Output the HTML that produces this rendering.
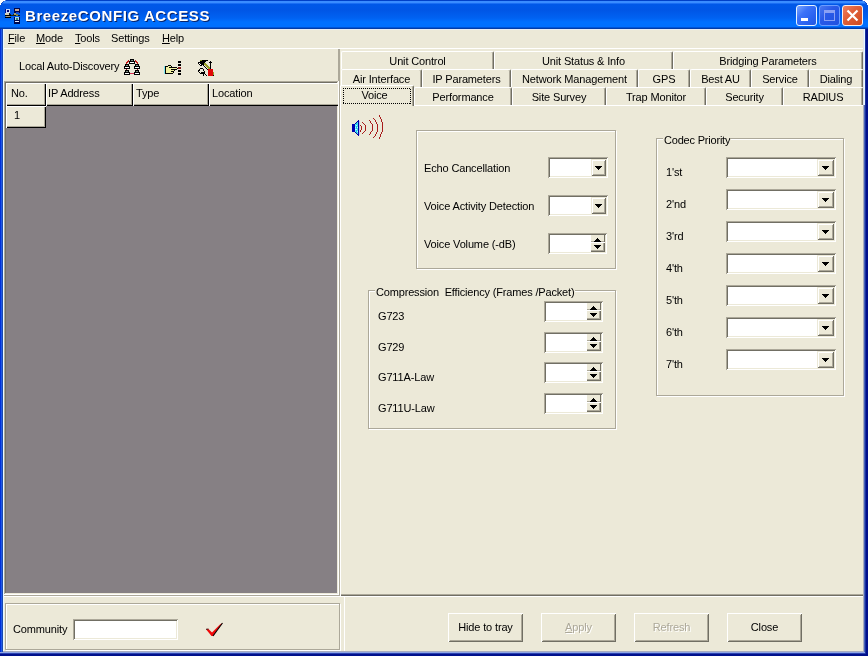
<!DOCTYPE html>
<html><head><meta charset="utf-8"><style>
*{margin:0;padding:0;box-sizing:border-box}
html,body{width:868px;height:656px;overflow:hidden;background:#fff}
body{position:relative;font-family:"Liberation Sans",sans-serif;font-size:11px;color:#000;letter-spacing:-0.15px}
#win{position:absolute;left:0;top:0;width:868px;height:656px;background:#0831d9;}
#title{position:absolute;left:0;top:0;width:868px;height:29px;
 background:linear-gradient(to bottom,#0040c8 0px,#0040c8 1px,#3a8cff 1px,#3a8cff 3px,#1a6ef4 3px,#1a6ef4 4px,#0058e8 4px,#0056e6 10px,#0062f2 18px,#0070ff 22px,#0070ff 27px,#0054d8 27px,#0054d8 28px,#003ca8 28px,#003ca8 29px)}
#client{position:absolute;left:4px;top:29px;width:859px;height:622px;background:#ece9d8}
.t{position:absolute;white-space:nowrap;line-height:13px;will-change:transform}
.u{text-decoration:underline;text-underline-offset:1px}
.r{position:absolute}
.hd{background:#ece9d8;box-shadow:inset 1px 1px #fff,inset -1px -1px #000,inset -2px -2px #aca899}
.grp{position:absolute;border:1px solid #aca899;box-shadow:1px 1px #fff, inset 1px 1px #fff}
.sunk{background:#fff;box-shadow:inset 1px 1px #aca899,inset -1px -1px #fff,inset 2px 2px #716f64,inset -2px -2px #ece9d8}
.rais{background:#ece9d8;box-shadow:inset 1px 1px #fff,inset -1px -1px #716f64,inset 2px 2px #ece9d8,inset -2px -2px #aca899}
.dbtn{position:absolute;background:#ece9d8;box-shadow:inset 1px 1px #ece9d8,inset -1px -1px #716f64,inset 2px 2px #fff,inset -2px -2px #aca899}
.tab{position:absolute;background:#ece9d8;border-left:1px solid #fff;border-top:1px solid #fff;border-right:1px solid #716f64;box-shadow:inset -1px 0 #aca899;border-radius:2px 2px 0 0;text-align:center;line-height:13px;padding-top:3px;white-space:nowrap;will-change:transform}
.arr{position:absolute;width:0;height:0;border-left:3.5px solid transparent;border-right:3.5px solid transparent;border-top:4px solid #000}
.arru{position:absolute;width:0;height:0;border-left:3.5px solid transparent;border-right:3.5px solid transparent;border-bottom:4px solid #000}
</style></head><body>
<div id="win">
 <div id="title"></div>
 <div class="t" style="left:26px;top:8px;font-size:15px;font-weight:bold;color:#0a246a;letter-spacing:0.6px;line-height:17px">BreezeCONFIG ACCESS</div>
 <div class="t" style="left:25px;top:7px;font-size:15px;font-weight:bold;color:#fff;letter-spacing:0.6px;line-height:17px">BreezeCONFIG ACCESS</div>
 <div id="client"></div>
 <div class="r" style="left:796px;top:5px;width:21px;height:21px;border:1px solid #e8f4ff;border-radius:3px;background:linear-gradient(135deg,#7aa6ff 0%,#3c72f8 35%,#2a62f0 70%,#2458e0 100%)"></div>
 <div class="r" style="left:801px;top:18px;width:7px;height:3px;background:#fff"></div>
 <div class="r" style="left:819px;top:5px;width:21px;height:21px;border:1px solid #6c9cff;border-radius:3px;background:linear-gradient(135deg,#4a78f0 0%,#2a5ae8 40%,#2050e0 100%)"></div>
 <div class="r" style="left:824px;top:10px;width:11px;height:11px;border:1px solid #8aa0f4;border-top-width:3px"></div>
 <div class="r" style="left:842px;top:5px;width:21px;height:21px;border:1px solid #f8f0f0;border-radius:3px;background:linear-gradient(135deg,#f08060 0%,#e0603a 40%,#d04a20 100%)"></div>
 <svg class="r" style="left:842px;top:5px" width="21" height="21"><path d="M5.5 5.5 L15.5 15.5 M15.5 5.5 L5.5 15.5" stroke="#fff" stroke-width="2.2"/></svg>
 <svg class="r" style="left:0;top:0" width="6" height="6" shape-rendering="crispEdges"><rect x="0" y="0" width="5" height="1" fill="#fff"/><rect x="0" y="1" width="3" height="1" fill="#fff"/><rect x="0" y="2" width="2" height="1" fill="#fff"/><rect x="0" y="3" width="1" height="2" fill="#fff"/><rect x="5" y="0" width="1" height="1" fill="#5080e0"/><rect x="3" y="1" width="1" height="1" fill="#3060d0"/><rect x="2" y="2" width="1" height="1" fill="#1850c8"/><rect x="1" y="3" width="1" height="1" fill="#1048c0"/></svg>
 <svg class="r" style="left:862px;top:0" width="6" height="6" shape-rendering="crispEdges"><rect x="1" y="0" width="5" height="1" fill="#fff"/><rect x="3" y="1" width="3" height="1" fill="#fff"/><rect x="4" y="2" width="2" height="1" fill="#fff"/><rect x="5" y="3" width="1" height="2" fill="#fff"/><rect x="0" y="0" width="1" height="1" fill="#5080e0"/><rect x="2" y="1" width="1" height="1" fill="#3060d0"/><rect x="3" y="2" width="1" height="1" fill="#1850c8"/><rect x="4" y="3" width="1" height="1" fill="#1048c0"/></svg>

 <div class="t" style="left:8px;top:32px;"><span class="u">F</span>ile</div>
 <div class="t" style="left:36px;top:32px;"><span class="u">M</span>ode</div>
 <div class="t" style="left:75px;top:32px;"><span class="u">T</span>ools</div>
 <div class="t" style="left:111px;top:32px;">Settings</div>
 <div class="t" style="left:162px;top:32px;"><span class="u">H</span>elp</div>
 <div class="r" style="left:4px;top:48px;width:860px;height:1px;background:#fff;"></div>
 <div class="t" style="left:19px;top:60px;">Local Auto-Discovery</div>
 <div class="r" style="left:338px;top:49px;width:1px;height:32px;background:#aca899;"></div>
 <div class="r" style="left:4px;top:81px;width:335px;height:1px;background:#aca899;"></div>
 <div class="r" style="left:4px;top:81px;width:1px;height:514px;background:#aca899;"></div>
 <div class="r" style="left:5px;top:82px;width:333px;height:1px;background:#716f64;"></div>
 <div class="r" style="left:5px;top:82px;width:1px;height:512px;background:#716f64;"></div>
 <div class="r" style="left:6px;top:83px;width:331px;height:510px;background:#868084;"></div>
 <div class="r" style="left:337px;top:82px;width:1px;height:512px;background:#ece9d8;"></div>
 <div class="r" style="left:5px;top:593px;width:333px;height:1px;background:#ece9d8;"></div>
 <div class="r hd" style="left:6px;top:83px;width:40px;height:23px"></div>
 <div class="t" style="left:11px;top:87px;">No.</div>
 <div class="r hd" style="left:46px;top:83px;width:87px;height:23px"></div>
 <div class="t" style="left:48px;top:87px;">IP Address</div>
 <div class="r hd" style="left:133px;top:83px;width:76px;height:23px"></div>
 <div class="t" style="left:136px;top:87px;">Type</div>
 <div class="r hd" style="left:209px;top:83px;width:131px;height:23px"></div>
 <div class="t" style="left:212px;top:87px;">Location</div>
 <div class="r hd" style="left:6px;top:106px;width:40px;height:22px"></div>
 <div class="t" style="left:14px;top:109px;">1</div>
 <div class="r" style="left:338px;top:81px;width:1px;height:514px;background:#fff;"></div>
 <div class="r" style="left:4px;top:594px;width:335px;height:1px;background:#fff;"></div>
 <div class="r" style="left:4px;top:595px;width:336px;height:1px;background:#aca899;"></div>
 <div class="r" style="left:4px;top:596px;width:860px;height:1px;background:#fff;"></div>
 <div class="grp" style="left:5px;top:603px;width:335px;height:47px"></div>
 <div class="t" style="left:13px;top:623px;">Community</div>
 <div class="r sunk" style="left:73px;top:619px;width:105px;height:21px"></div>
 <svg class="r" style="left:3px;top:6px" width="20" height="20" shape-rendering="crispEdges"><rect x="2" y="3" width="1" height="5" fill="#001090"/><rect x="3" y="3" width="4" height="1" fill="#c8d8f8"/><rect x="3" y="4" width="1" height="3" fill="#c8d8f8"/><rect x="6" y="4" width="1" height="3" fill="#c8d8f8"/><rect x="3" y="6" width="4" height="1" fill="#c8d8f8"/><rect x="4" y="4" width="2" height="2" fill="#000070"/><rect x="2" y="7" width="4" height="2" fill="#d8d0b8"/><rect x="6" y="7" width="1" height="2" fill="#102030"/><rect x="7" y="8" width="1" height="1" fill="#102030"/><rect x="2" y="9" width="6" height="1" fill="#000000"/><rect x="2" y="11" width="6" height="1" fill="#000000"/><rect x="3" y="10" width="4" height="1" fill="#a89878"/><rect x="8" y="9" width="3" height="1" fill="#202818"/><rect x="10" y="8" width="2" height="1" fill="#202818"/><rect x="11" y="7" width="2" height="3" fill="#a8a070"/><rect x="11" y="2" width="6" height="5" fill="#000850"/><rect x="12" y="3" width="4" height="2" fill="#c8a898"/><rect x="13" y="6" width="3" height="1" fill="#2040c0"/><rect x="11" y="9" width="6" height="1" fill="#101810"/><rect x="13" y="8" width="2" height="2" fill="#808040"/><rect x="11" y="11" width="6" height="7" fill="#000850"/><rect x="12" y="11" width="4" height="3" fill="#a8d8f0"/><rect x="13" y="12" width="2" height="2" fill="#408878"/><rect x="12" y="15" width="4" height="1" fill="#e8f0ff"/></svg>
 <svg class="r" style="left:122px;top:57px" width="20" height="20" shape-rendering="crispEdges"><rect x="4" y="5" width="1" height="1" fill="#c41818"/><rect x="4" y="6" width="1" height="1" fill="#c41818"/><rect x="5" y="4" width="1" height="1" fill="#c41818"/><rect x="5" y="5" width="1" height="1" fill="#c41818"/><rect x="6" y="3" width="1" height="1" fill="#c41818"/><rect x="6" y="4" width="1" height="1" fill="#c41818"/><rect x="13" y="3" width="1" height="1" fill="#c41818"/><rect x="13" y="4" width="1" height="1" fill="#c41818"/><rect x="14" y="4" width="1" height="1" fill="#c41818"/><rect x="14" y="5" width="1" height="1" fill="#c41818"/><rect x="15" y="5" width="1" height="1" fill="#c41818"/><rect x="15" y="6" width="1" height="1" fill="#c41818"/><rect x="4" y="11" width="1" height="2" fill="#a01030"/><rect x="15" y="11" width="1" height="2" fill="#a01030"/><rect x="8" y="16" width="4" height="1" fill="#d03050"/><rect x="8" y="2" width="4" height="2" fill="#000"/><rect x="9" y="3" width="2" height="1" fill="#7a8a80"/><rect x="7" y="4" width="6" height="3" fill="#000"/><rect x="8" y="5" width="4" height="1" fill="#fff"/><rect x="3" y="7" width="4" height="2" fill="#000"/><rect x="4" y="8" width="2" height="1" fill="#7a8a80"/><rect x="2" y="9" width="6" height="3" fill="#000"/><rect x="3" y="10" width="4" height="1" fill="#fff"/><rect x="13" y="7" width="4" height="2" fill="#000"/><rect x="14" y="8" width="2" height="1" fill="#7a8a80"/><rect x="12" y="9" width="6" height="3" fill="#000"/><rect x="13" y="10" width="4" height="1" fill="#fff"/><rect x="3" y="13" width="4" height="2" fill="#000"/><rect x="4" y="14" width="2" height="1" fill="#7a8a80"/><rect x="2" y="15" width="6" height="3" fill="#000"/><rect x="3" y="16" width="4" height="1" fill="#fff"/><rect x="13" y="13" width="4" height="2" fill="#000"/><rect x="14" y="14" width="2" height="1" fill="#7a8a80"/><rect x="12" y="15" width="6" height="3" fill="#000"/><rect x="13" y="16" width="4" height="1" fill="#fff"/></svg>
 <svg class="r" style="left:162px;top:60px" width="20" height="16" shape-rendering="crispEdges"><rect x="2" y="6" width="1" height="8" fill="#80e8f0"/><rect x="4" y="6" width="5" height="8" fill="#f0f0a0"/><rect x="8" y="8" width="7" height="1" fill="#f0f0a0"/><rect x="8" y="10" width="4" height="1" fill="#f0f0a0"/><rect x="8" y="12" width="3" height="1" fill="#f0f0a0"/><rect x="3" y="6" width="1" height="8" fill="#000"/><rect x="3" y="6" width="3" height="1" fill="#000"/><rect x="3" y="13" width="3" height="1" fill="#000"/><rect x="6" y="5" width="3" height="1" fill="#000"/><rect x="7" y="7" width="8" height="1" fill="#000"/><rect x="9" y="6" width="1" height="1" fill="#000"/><rect x="15" y="8" width="1" height="1" fill="#000"/><rect x="9" y="9" width="6" height="1" fill="#000"/><rect x="12" y="10" width="1" height="1" fill="#000"/><rect x="9" y="11" width="3" height="1" fill="#000"/><rect x="11" y="12" width="1" height="1" fill="#000"/><rect x="6" y="13" width="5" height="1" fill="#000"/><rect x="16" y="1" width="3" height="2" fill="#000"/><rect x="16" y="4" width="3" height="2" fill="#000"/><rect x="16" y="10" width="3" height="2" fill="#000"/><rect x="16" y="13" width="3" height="2" fill="#000"/><rect x="16" y="7" width="3" height="2" fill="#801818"/></svg>
 <svg class="r" style="left:196px;top:58px" width="20" height="20" shape-rendering="crispEdges"><rect x="4" y="2" width="2" height="1" fill="#8a9a20"/><rect x="5" y="3" width="1" height="1" fill="#8a9a20"/><rect x="6" y="2" width="6" height="1" fill="#000"/><rect x="4" y="3" width="6" height="1" fill="#000"/><rect x="2" y="4" width="7" height="1" fill="#000"/><rect x="2" y="5" width="1" height="1" fill="#000"/><rect x="4" y="5" width="4" height="1" fill="#000"/><rect x="3" y="6" width="1" height="1" fill="#000"/><rect x="5" y="6" width="2" height="1" fill="#000"/><rect x="4" y="7" width="2" height="1" fill="#000"/><rect x="3" y="5" width="1" height="1" fill="#fff"/><rect x="4" y="6" width="1" height="1" fill="#fff"/><rect x="8" y="5" width="2" height="1" fill="#98a028"/><rect x="8" y="6" width="3" height="1" fill="#98a028"/><rect x="9" y="7" width="3" height="1" fill="#98a028"/><rect x="10" y="8" width="3" height="1" fill="#98a028"/><rect x="11" y="9" width="3" height="1" fill="#98a028"/><rect x="12" y="10" width="2" height="1" fill="#98a028"/><rect x="13" y="11" width="1" height="1" fill="#98a028"/><rect x="7" y="7" width="1" height="1" fill="#000"/><rect x="8" y="8" width="1" height="1" fill="#000"/><rect x="9" y="9" width="1" height="1" fill="#000"/><rect x="10" y="10" width="1" height="1" fill="#000"/><rect x="11" y="11" width="1" height="1" fill="#000"/><rect x="7" y="6" width="1" height="1" fill="#000"/><rect x="14" y="3" width="1" height="8" fill="#000"/><rect x="13" y="4" width="3" height="1" fill="#000"/><rect x="12" y="11" width="5" height="7" fill="#e00808"/><rect x="17" y="14" width="1" height="3" fill="#98a028"/><rect x="17" y="17" width="1" height="1" fill="#000"/><rect x="4" y="10" width="3" height="1" fill="#000"/><rect x="3" y="11" width="1" height="1" fill="#000"/><rect x="7" y="11" width="1" height="1" fill="#000"/><rect x="2" y="12" width="2" height="1" fill="#000"/><rect x="7" y="12" width="1" height="1" fill="#000"/><rect x="2" y="13" width="1" height="1" fill="#000"/><rect x="8" y="13" width="1" height="1" fill="#000"/><rect x="3" y="14" width="1" height="1" fill="#000"/><rect x="5" y="14" width="3" height="1" fill="#000"/><rect x="8" y="14" width="1" height="1" fill="#000"/><rect x="4" y="15" width="5" height="1" fill="#000"/><rect x="7" y="16" width="1" height="1" fill="#000"/><rect x="9" y="16" width="1" height="1" fill="#000"/><rect x="7" y="17" width="1" height="1" fill="#000"/><rect x="10" y="17" width="1" height="1" fill="#000"/></svg>
 <svg class="r" style="left:204px;top:620px" width="20" height="18">
  <path d="M2 9.3 L4.5 9 L8 12.5 L16 4.5 L18.5 3 L9 16 L7.5 16 Z" fill="#f00808"/><path d="M18.5 3 L9 16" stroke="#000" stroke-width="1.1"/><path d="M2 9.3 L4.5 9" stroke="#401010" stroke-width="1"/>
 </svg>
 <div class="r" style="left:340px;top:105px;width:524px;height:491px;background:#ece9d8;box-shadow:inset 1px 1px #fff, inset 0 -1px #716f64, inset 0 -2px #aca899"></div>
 <div class="tab" style="left:341px;top:51px;width:153px;height:18px">Unit Control</div>
 <div class="tab" style="left:494px;top:51px;width:179px;height:18px">Unit Status &amp; Info</div>
 <div class="tab" style="left:673px;top:51px;width:190px;height:18px">Bridging Parameters</div>
 <div class="tab" style="left:341px;top:69px;width:81px;height:18px">Air Interface</div>
 <div class="tab" style="left:422px;top:69px;width:89px;height:18px">IP Parameters</div>
 <div class="tab" style="left:511px;top:69px;width:127px;height:18px">Network Management</div>
 <div class="tab" style="left:638px;top:69px;width:52px;height:18px">GPS</div>
 <div class="tab" style="left:690px;top:69px;width:61px;height:18px">Best AU</div>
 <div class="tab" style="left:751px;top:69px;width:58px;height:18px">Service</div>
 <div class="tab" style="left:809px;top:69px;width:54px;height:18px">Dialing</div>
 <div class="tab" style="left:414px;top:87px;width:98px;height:18px">Performance</div>
 <div class="tab" style="left:512px;top:87px;width:94px;height:18px">Site Survey</div>
 <div class="tab" style="left:606px;top:87px;width:100px;height:18px">Trap Monitor</div>
 <div class="tab" style="left:706px;top:87px;width:77px;height:18px">Security</div>
 <div class="tab" style="left:783px;top:87px;width:80px;height:18px">RADIUS</div>
 <div class="tab" style="left:340px;top:85px;width:74px;height:21px;border-bottom:none;padding-top:3px;padding-right:5px">Voice</div>
 <div class="r" style="left:343px;top:88px;width:68px;height:1px;background:repeating-linear-gradient(to right,#000 0 1px,transparent 1px 2px);"></div>
 <div class="r" style="left:343px;top:103px;width:68px;height:1px;background:repeating-linear-gradient(to right,#000 0 1px,transparent 1px 2px);"></div>
 <div class="r" style="left:343px;top:88px;width:1px;height:16px;background:repeating-linear-gradient(to bottom,#000 0 1px,transparent 1px 2px);"></div>
 <div class="r" style="left:410px;top:89px;width:1px;height:15px;background:repeating-linear-gradient(to bottom,#000 0 1px,transparent 1px 2px);"></div>
 <div class="r" style="left:339px;top:49px;width:1px;height:547px;background:#aca899;"></div>
 <div class="r" style="left:340px;top:86px;width:1px;height:509px;background:#fff;"></div>
 <svg class="r" style="left:350px;top:112px" width="36" height="30" shape-rendering="crispEdges"><rect x="2" y="12" width="3" height="8" fill="#0000b0"/><rect x="8" y="8" width="1" height="16" fill="#0000a0"/><rect x="7" y="9" width="1" height="1" fill="#0000a0"/><rect x="6" y="10" width="1" height="1" fill="#0000a0"/><rect x="5" y="11" width="1" height="1" fill="#0000a0"/><rect x="7" y="22" width="1" height="1" fill="#0000a0"/><rect x="6" y="21" width="1" height="1" fill="#0000a0"/><rect x="5" y="20" width="1" height="1" fill="#0000a0"/><rect x="7" y="10" width="1" height="12" fill="#40e0f0"/><rect x="6" y="11" width="1" height="10" fill="#20c8e8"/><rect x="5" y="12" width="1" height="8" fill="#60f0ff"/><rect x="6" y="13" width="1" height="1" fill="#b0ffff"/><rect x="7" y="15" width="1" height="1" fill="#b0ffff"/><rect x="6" y="17" width="1" height="1" fill="#b0ffff"/><rect x="7" y="19" width="1" height="1" fill="#b0ffff"/><rect x="5" y="15" width="1" height="1" fill="#b0ffff"/><rect x="5" y="17" width="1" height="1" fill="#b0ffff"/><rect x="9" y="9" width="1" height="14" fill="#c0c0f0"/><rect x="10" y="13" width="1" height="1" fill="#a81c1c"/><rect x="11" y="14" width="1" height="1" fill="#a81c1c"/><rect x="11" y="15" width="1" height="3" fill="#a81c1c"/><rect x="10" y="18" width="1" height="1" fill="#a81c1c"/><rect x="10" y="19" width="1" height="1" fill="#a81c1c"/><rect x="12" y="10" width="1" height="1" fill="#a81c1c"/><rect x="13" y="11" width="1" height="1" fill="#a81c1c"/><rect x="14" y="12" width="1" height="1" fill="#a81c1c"/><rect x="15" y="13" width="1" height="6" fill="#a81c1c"/><rect x="14" y="19" width="1" height="1" fill="#a81c1c"/><rect x="13" y="20" width="1" height="1" fill="#a81c1c"/><rect x="12" y="21" width="1" height="1" fill="#a81c1c"/><rect x="19" y="8" width="1" height="1" fill="#a81c1c"/><rect x="20" y="9" width="1" height="1" fill="#a81c1c"/><rect x="20" y="10" width="1" height="1" fill="#a81c1c"/><rect x="21" y="11" width="1" height="1" fill="#a81c1c"/><rect x="22" y="12" width="1" height="7" fill="#a81c1c"/><rect x="21" y="19" width="1" height="1" fill="#a81c1c"/><rect x="20" y="20" width="1" height="1" fill="#a81c1c"/><rect x="20" y="21" width="1" height="1" fill="#a81c1c"/><rect x="19" y="22" width="1" height="1" fill="#a81c1c"/><rect x="23" y="6" width="1" height="1" fill="#a81c1c"/><rect x="24" y="7" width="1" height="1" fill="#a81c1c"/><rect x="25" y="8" width="1" height="1" fill="#a81c1c"/><rect x="25" y="9" width="1" height="1" fill="#a81c1c"/><rect x="26" y="10" width="1" height="1" fill="#a81c1c"/><rect x="26" y="11" width="1" height="1" fill="#a81c1c"/><rect x="27" y="12" width="1" height="8" fill="#a81c1c"/><rect x="26" y="20" width="1" height="1" fill="#a81c1c"/><rect x="26" y="21" width="1" height="1" fill="#a81c1c"/><rect x="25" y="22" width="1" height="1" fill="#a81c1c"/><rect x="25" y="23" width="1" height="1" fill="#a81c1c"/><rect x="24" y="24" width="1" height="1" fill="#a81c1c"/><rect x="23" y="25" width="1" height="1" fill="#a81c1c"/><rect x="29" y="3" width="1" height="1" fill="#a81c1c"/><rect x="29" y="4" width="1" height="1" fill="#a81c1c"/><rect x="30" y="5" width="1" height="1" fill="#a81c1c"/><rect x="30" y="6" width="1" height="1" fill="#a81c1c"/><rect x="31" y="7" width="1" height="1" fill="#a81c1c"/><rect x="31" y="8" width="1" height="1" fill="#a81c1c"/><rect x="31" y="9" width="1" height="1" fill="#a81c1c"/><rect x="32" y="10" width="1" height="10" fill="#a81c1c"/><rect x="31" y="20" width="1" height="1" fill="#a81c1c"/><rect x="31" y="21" width="1" height="1" fill="#a81c1c"/><rect x="30" y="22" width="1" height="1" fill="#a81c1c"/><rect x="30" y="23" width="1" height="1" fill="#a81c1c"/><rect x="30" y="24" width="1" height="1" fill="#a81c1c"/><rect x="29" y="25" width="1" height="1" fill="#a81c1c"/><rect x="29" y="26" width="1" height="1" fill="#a81c1c"/></svg>
 <div class="grp" style="left:416px;top:130px;width:200px;height:139px"></div>
 <div class="t" style="left:424px;top:162px;">Echo Cancellation</div>
 <div class="r sunk" style="left:548px;top:157px;width:60px;height:21px"></div>
 <div class="dbtn" style="left:591px;top:159px;width:15px;height:17px"></div>
 <div class="r" style="left:595px;top:166px;width:7px;height:1px;background:#000"></div><div class="r" style="left:596px;top:167px;width:5px;height:1px;background:#000"></div><div class="r" style="left:597px;top:168px;width:3px;height:1px;background:#000"></div><div class="r" style="left:598px;top:169px;width:1px;height:1px;background:#000"></div>
 <div class="t" style="left:424px;top:200px;">Voice Activity Detection</div>
 <div class="r sunk" style="left:548px;top:195px;width:60px;height:21px"></div>
 <div class="dbtn" style="left:591px;top:197px;width:15px;height:17px"></div>
 <div class="r" style="left:595px;top:204px;width:7px;height:1px;background:#000"></div><div class="r" style="left:596px;top:205px;width:5px;height:1px;background:#000"></div><div class="r" style="left:597px;top:206px;width:3px;height:1px;background:#000"></div><div class="r" style="left:598px;top:207px;width:1px;height:1px;background:#000"></div>
 <div class="t" style="left:424px;top:238px;">Voice Volume (-dB)</div>
 <div class="r sunk" style="left:548px;top:233px;width:59px;height:21px"></div>
 <div class="r" style="left:591px;top:235px;width:14px;height:7px;background:#ece9d8;box-shadow:inset -1px 0 #716f64,inset 0 -1px #aca899"></div>
 <div class="r" style="left:591px;top:242px;width:14px;height:10px;background:#ece9d8;box-shadow:inset 0 1px #fff,inset -1px -1px #716f64,inset -2px -2px #aca899"></div>
 <div class="r" style="left:597px;top:238px;width:1px;height:1px;background:#000"></div><div class="r" style="left:596px;top:239px;width:3px;height:1px;background:#000"></div><div class="r" style="left:595px;top:240px;width:5px;height:1px;background:#000"></div><div class="r" style="left:594px;top:241px;width:7px;height:1px;background:#000"></div>
 <div class="r" style="left:594px;top:245px;width:7px;height:1px;background:#000"></div><div class="r" style="left:595px;top:246px;width:5px;height:1px;background:#000"></div><div class="r" style="left:596px;top:247px;width:3px;height:1px;background:#000"></div><div class="r" style="left:597px;top:248px;width:1px;height:1px;background:#000"></div>
 <div class="grp" style="left:368px;top:290px;width:248px;height:139px"></div>
 <div class="t" style="left:375px;top:286px;background:#ece9d8;padding:0 1px;letter-spacing:-0.17px">Compression&nbsp; Efficiency (Frames /Packet)</div>
 <div class="t" style="left:378px;top:310px;">G723</div>
 <div class="t" style="left:378px;top:341px;">G729</div>
 <div class="t" style="left:378px;top:371px;">G711A-Law</div>
 <div class="t" style="left:378px;top:402px;">G711U-Law</div>
 <div class="r sunk" style="left:544px;top:301px;width:59px;height:21px"></div>
 <div class="r" style="left:587px;top:303px;width:14px;height:7px;background:#ece9d8;box-shadow:inset -1px 0 #716f64,inset 0 -1px #aca899"></div>
 <div class="r" style="left:587px;top:310px;width:14px;height:10px;background:#ece9d8;box-shadow:inset 0 1px #fff,inset -1px -1px #716f64,inset -2px -2px #aca899"></div>
 <div class="r" style="left:593px;top:306px;width:1px;height:1px;background:#000"></div><div class="r" style="left:592px;top:307px;width:3px;height:1px;background:#000"></div><div class="r" style="left:591px;top:308px;width:5px;height:1px;background:#000"></div><div class="r" style="left:590px;top:309px;width:7px;height:1px;background:#000"></div>
 <div class="r" style="left:590px;top:313px;width:7px;height:1px;background:#000"></div><div class="r" style="left:591px;top:314px;width:5px;height:1px;background:#000"></div><div class="r" style="left:592px;top:315px;width:3px;height:1px;background:#000"></div><div class="r" style="left:593px;top:316px;width:1px;height:1px;background:#000"></div>
 <div class="r sunk" style="left:544px;top:332px;width:59px;height:21px"></div>
 <div class="r" style="left:587px;top:334px;width:14px;height:7px;background:#ece9d8;box-shadow:inset -1px 0 #716f64,inset 0 -1px #aca899"></div>
 <div class="r" style="left:587px;top:341px;width:14px;height:10px;background:#ece9d8;box-shadow:inset 0 1px #fff,inset -1px -1px #716f64,inset -2px -2px #aca899"></div>
 <div class="r" style="left:593px;top:337px;width:1px;height:1px;background:#000"></div><div class="r" style="left:592px;top:338px;width:3px;height:1px;background:#000"></div><div class="r" style="left:591px;top:339px;width:5px;height:1px;background:#000"></div><div class="r" style="left:590px;top:340px;width:7px;height:1px;background:#000"></div>
 <div class="r" style="left:590px;top:344px;width:7px;height:1px;background:#000"></div><div class="r" style="left:591px;top:345px;width:5px;height:1px;background:#000"></div><div class="r" style="left:592px;top:346px;width:3px;height:1px;background:#000"></div><div class="r" style="left:593px;top:347px;width:1px;height:1px;background:#000"></div>
 <div class="r sunk" style="left:544px;top:362px;width:59px;height:21px"></div>
 <div class="r" style="left:587px;top:364px;width:14px;height:7px;background:#ece9d8;box-shadow:inset -1px 0 #716f64,inset 0 -1px #aca899"></div>
 <div class="r" style="left:587px;top:371px;width:14px;height:10px;background:#ece9d8;box-shadow:inset 0 1px #fff,inset -1px -1px #716f64,inset -2px -2px #aca899"></div>
 <div class="r" style="left:593px;top:367px;width:1px;height:1px;background:#000"></div><div class="r" style="left:592px;top:368px;width:3px;height:1px;background:#000"></div><div class="r" style="left:591px;top:369px;width:5px;height:1px;background:#000"></div><div class="r" style="left:590px;top:370px;width:7px;height:1px;background:#000"></div>
 <div class="r" style="left:590px;top:374px;width:7px;height:1px;background:#000"></div><div class="r" style="left:591px;top:375px;width:5px;height:1px;background:#000"></div><div class="r" style="left:592px;top:376px;width:3px;height:1px;background:#000"></div><div class="r" style="left:593px;top:377px;width:1px;height:1px;background:#000"></div>
 <div class="r sunk" style="left:544px;top:393px;width:59px;height:21px"></div>
 <div class="r" style="left:587px;top:395px;width:14px;height:7px;background:#ece9d8;box-shadow:inset -1px 0 #716f64,inset 0 -1px #aca899"></div>
 <div class="r" style="left:587px;top:402px;width:14px;height:10px;background:#ece9d8;box-shadow:inset 0 1px #fff,inset -1px -1px #716f64,inset -2px -2px #aca899"></div>
 <div class="r" style="left:593px;top:398px;width:1px;height:1px;background:#000"></div><div class="r" style="left:592px;top:399px;width:3px;height:1px;background:#000"></div><div class="r" style="left:591px;top:400px;width:5px;height:1px;background:#000"></div><div class="r" style="left:590px;top:401px;width:7px;height:1px;background:#000"></div>
 <div class="r" style="left:590px;top:405px;width:7px;height:1px;background:#000"></div><div class="r" style="left:591px;top:406px;width:5px;height:1px;background:#000"></div><div class="r" style="left:592px;top:407px;width:3px;height:1px;background:#000"></div><div class="r" style="left:593px;top:408px;width:1px;height:1px;background:#000"></div>
 <div class="grp" style="left:656px;top:138px;width:188px;height:258px"></div>
 <div class="t" style="left:663px;top:134px;background:#ece9d8;padding:0 1px;letter-spacing:-0.2px">Codec Priority</div>
 <div class="t" style="left:666px;top:166px;">1'st</div>
 <div class="r sunk" style="left:726px;top:157px;width:110px;height:21px"></div>
 <div class="dbtn" style="left:817px;top:159px;width:17px;height:17px"></div>
 <div class="r" style="left:822px;top:166px;width:7px;height:1px;background:#000"></div><div class="r" style="left:823px;top:167px;width:5px;height:1px;background:#000"></div><div class="r" style="left:824px;top:168px;width:3px;height:1px;background:#000"></div><div class="r" style="left:825px;top:169px;width:1px;height:1px;background:#000"></div>
 <div class="t" style="left:666px;top:198px;">2'nd</div>
 <div class="r sunk" style="left:726px;top:189px;width:110px;height:21px"></div>
 <div class="dbtn" style="left:817px;top:191px;width:17px;height:17px"></div>
 <div class="r" style="left:822px;top:198px;width:7px;height:1px;background:#000"></div><div class="r" style="left:823px;top:199px;width:5px;height:1px;background:#000"></div><div class="r" style="left:824px;top:200px;width:3px;height:1px;background:#000"></div><div class="r" style="left:825px;top:201px;width:1px;height:1px;background:#000"></div>
 <div class="t" style="left:666px;top:230px;">3'rd</div>
 <div class="r sunk" style="left:726px;top:221px;width:110px;height:21px"></div>
 <div class="dbtn" style="left:817px;top:223px;width:17px;height:17px"></div>
 <div class="r" style="left:822px;top:230px;width:7px;height:1px;background:#000"></div><div class="r" style="left:823px;top:231px;width:5px;height:1px;background:#000"></div><div class="r" style="left:824px;top:232px;width:3px;height:1px;background:#000"></div><div class="r" style="left:825px;top:233px;width:1px;height:1px;background:#000"></div>
 <div class="t" style="left:666px;top:262px;">4'th</div>
 <div class="r sunk" style="left:726px;top:253px;width:110px;height:21px"></div>
 <div class="dbtn" style="left:817px;top:255px;width:17px;height:17px"></div>
 <div class="r" style="left:822px;top:262px;width:7px;height:1px;background:#000"></div><div class="r" style="left:823px;top:263px;width:5px;height:1px;background:#000"></div><div class="r" style="left:824px;top:264px;width:3px;height:1px;background:#000"></div><div class="r" style="left:825px;top:265px;width:1px;height:1px;background:#000"></div>
 <div class="t" style="left:666px;top:294px;">5'th</div>
 <div class="r sunk" style="left:726px;top:285px;width:110px;height:21px"></div>
 <div class="dbtn" style="left:817px;top:287px;width:17px;height:17px"></div>
 <div class="r" style="left:822px;top:294px;width:7px;height:1px;background:#000"></div><div class="r" style="left:823px;top:295px;width:5px;height:1px;background:#000"></div><div class="r" style="left:824px;top:296px;width:3px;height:1px;background:#000"></div><div class="r" style="left:825px;top:297px;width:1px;height:1px;background:#000"></div>
 <div class="t" style="left:666px;top:326px;">6'th</div>
 <div class="r sunk" style="left:726px;top:317px;width:110px;height:21px"></div>
 <div class="dbtn" style="left:817px;top:319px;width:17px;height:17px"></div>
 <div class="r" style="left:822px;top:326px;width:7px;height:1px;background:#000"></div><div class="r" style="left:823px;top:327px;width:5px;height:1px;background:#000"></div><div class="r" style="left:824px;top:328px;width:3px;height:1px;background:#000"></div><div class="r" style="left:825px;top:329px;width:1px;height:1px;background:#000"></div>
 <div class="t" style="left:666px;top:358px;">7'th</div>
 <div class="r sunk" style="left:726px;top:349px;width:110px;height:21px"></div>
 <div class="dbtn" style="left:817px;top:351px;width:17px;height:17px"></div>
 <div class="r" style="left:822px;top:358px;width:7px;height:1px;background:#000"></div><div class="r" style="left:823px;top:359px;width:5px;height:1px;background:#000"></div><div class="r" style="left:824px;top:360px;width:3px;height:1px;background:#000"></div><div class="r" style="left:825px;top:361px;width:1px;height:1px;background:#000"></div>
 <div class="r" style="left:344px;top:596px;width:520px;height:1px;background:#fff;"></div>
 <div class="r" style="left:344px;top:596px;width:1px;height:56px;background:#fff;"></div>
 <div class="r rais" style="left:448px;top:613px;width:75px;height:29px"></div>
 <div class="t" style="left:448px;top:621px;width:75px;text-align:center">Hide to tray</div>
 <div class="r rais" style="left:541px;top:613px;width:75px;height:29px"></div>
 <div class="t" style="left:542px;top:622px;width:75px;text-align:center;color:#fff"><span class="u">A</span>pply</div>
 <div class="t" style="left:541px;top:621px;width:75px;text-align:center;color:#aca899"><span class="u">A</span>pply</div>
 <div class="r rais" style="left:634px;top:613px;width:75px;height:29px"></div>
 <div class="t" style="left:635px;top:622px;width:75px;text-align:center;color:#fff">Refresh</div>
 <div class="t" style="left:634px;top:621px;width:75px;text-align:center;color:#aca899">Refresh</div>
 <div class="r rais" style="left:727px;top:613px;width:75px;height:29px"></div>
 <div class="t" style="left:727px;top:621px;width:75px;text-align:center">Close</div>
 <div class="r" style="left:0px;top:29px;width:1px;height:627px;background:#0030d8;"></div>
 <div class="r" style="left:1px;top:29px;width:1px;height:627px;background:#2058e8;"></div>
 <div class="r" style="left:2px;top:29px;width:1px;height:627px;background:#1848b0;"></div>
 <div class="r" style="left:3px;top:29px;width:1px;height:622px;background:#e8f8ff;"></div>
 <div class="r" style="left:863px;top:29px;width:1px;height:622px;background:#a8acc0;"></div>
 <div class="r" style="left:864px;top:29px;width:1px;height:627px;background:#4a64b8;"></div>
 <div class="r" style="left:865px;top:29px;width:1px;height:627px;background:#1830a0;"></div>
 <div class="r" style="left:866px;top:29px;width:2px;height:627px;background:#00108c;"></div>
 <div class="r" style="left:3px;top:651px;width:861px;height:1px;background:#a8acc0;"></div>
 <div class="r" style="left:0px;top:652px;width:865px;height:1px;background:#8ea6e6;"></div>
 <div class="r" style="left:0px;top:653px;width:865px;height:1px;background:#2a40b0;"></div>
 <div class="r" style="left:0px;top:654px;width:868px;height:2px;background:#00108c;"></div>
 <div class="r" style="left:4px;top:29px;width:859px;height:1px;background:#e8ecf4;"></div>
 <div class="r" style="left:863px;top:29px;width:1px;height:76px;background:#e0e4f0;"></div>
 <div class="r" style="left:864px;top:29px;width:1px;height:76px;background:#e8f8ff;"></div>
</div>
</body></html>
